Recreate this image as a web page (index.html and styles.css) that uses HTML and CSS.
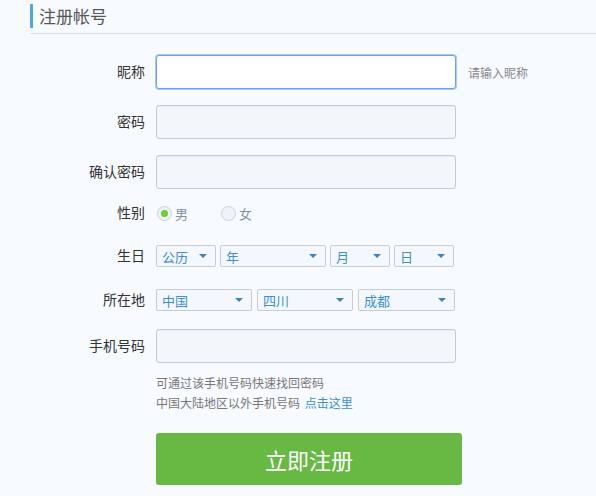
FILE: index.html
```html
<!DOCTYPE html>
<html lang="zh-CN">
<head>
<meta charset="utf-8">
<title>注册帐号</title>
<link rel="stylesheet" href="styles.css">
</head>
<body>
<div class="header"><h1 class="title">注册帐号</h1></div>
<form class="form">
  <div class="row row-input">
    <label class="label">昵称</label>
    <div class="input input-focus"></div>
    <span class="hint">请输入昵称</span>
  </div>
  <div class="row row-input">
    <label class="label">密码</label>
    <div class="input"></div>
  </div>
  <div class="row row-input">
    <label class="label">确认密码</label>
    <div class="input"></div>
  </div>
  <div class="row row-gender">
    <label class="label">性别</label>
    <div class="radios">
      <span class="radio checked"></span><span class="radio-text">男</span>
      <span class="radio second"></span><span class="radio-text">女</span>
    </div>
  </div>
  <div class="row row-birth">
    <label class="label">生日</label>
    <div class="selects gap4">
      <div class="select w60"><span>公历</span><i class="arrow"></i></div>
      <div class="select w106"><span>年</span><i class="arrow"></i></div>
      <div class="select w60"><span>月</span><i class="arrow"></i></div>
      <div class="select w60"><span>日</span><i class="arrow"></i></div>
    </div>
  </div>
  <div class="row row-loc">
    <label class="label">所在地</label>
    <div class="selects gap5">
      <div class="select w96"><span>中国</span><i class="arrow"></i></div>
      <div class="select w96"><span>四川</span><i class="arrow"></i></div>
      <div class="select w97"><span>成都</span><i class="arrow"></i></div>
    </div>
  </div>
  <div class="row row-input row-last">
    <label class="label">手机号码</label>
    <div class="input"></div>
  </div>
  <div class="help">
    <p>可通过该手机号码快速找回密码</p>
    <p>中国大陆地区以外手机号码 <a class="link" href="#">点击这里</a></p>
  </div>
  <div class="submit-wrap">
    <button type="button" class="submit">立即注册</button>
  </div>
</form>
</body>
</html>
```
FILE: styles.css
```css
* { box-sizing: border-box; }
html, body {
  margin: 0;
  padding: 0;
  background: #f7fbff;
  font-family: "Noto Sans CJK SC", "Microsoft YaHei", sans-serif;
}
.header {
  margin-left: 30px;
  padding-top: 4px;
  padding-bottom: 5px;
  border-bottom: 1px solid #dcdfe3;
}
.title {
  margin: 0;
  height: 24px;
  line-height: 24px;
  border-left: 3px solid #4fa8e0;
  padding-left: 6px;
  font-size: 17px;
  font-weight: normal;
  color: #555;
}
.form {
  margin-top: 21px;
}
.row {
  display: flex;
  align-items: center;
}
.label {
  width: 145px;
  margin-right: 11px;
  text-align: right;
  font-size: 14px;
  line-height: 1;
  padding-bottom: 2px;
  color: #333;
  flex: none;
}
.row-input { height: 34px; margin-bottom: 16px; }
.row-last { margin-bottom: 0; }
.row-gender { height: 16px; margin-bottom: 24px; }
.row-birth { height: 22px; margin-bottom: 22px; }
.row-loc { height: 22px; margin-bottom: 18px; }

.input {
  width: 300px;
  height: 34px;
  border: 1px solid #c2ccd6;
  border-radius: 3px;
  background: #f3f7fb;
  box-shadow: inset 0 1px 1px rgba(0,0,0,0.05);
}
.input-focus {
  background: #fff;
  border: 1px solid #6c9fee;
  box-shadow: 0 0 0 1px #a9c9f6;
}
.hint {
  margin-left: 12px;
  font-size: 12px;
  color: #888;
}
.radios {
  display: flex;
  align-items: center;
}
.radio {
  width: 15px;
  height: 15px;
  border-radius: 50%;
  border: 1px solid #c8d2dc;
  background: #eef3f7;
  margin-left: 1px;
  position: relative;
  flex: none;
}
.radio.checked::after {
  content: "";
  position: absolute;
  left: 3px;
  top: 3px;
  width: 7px;
  height: 7px;
  border-radius: 50%;
  background: #6bd12a;
}
.radio.second { margin-left: 33px; }
.radio-text {
  margin-left: 3px;
  font-size: 13px;
  color: #7f91a5;
}
.selects { display: flex; }
.gap4 { gap: 4px; }
.gap5 { gap: 5px; }
.select {
  height: 22px;
  border: 1px solid #c3cdd7;
  border-radius: 2px;
  background: #f4f8fc;
  display: flex;
  align-items: center;
  justify-content: space-between;
  padding: 0 8px 0 5px;
  font-size: 13px;
  color: #3a8fd6;
}
.w60 { width: 60px; }
.w106 { width: 106px; }
.w96 { width: 96px; }
.w97 { width: 97px; }
.arrow {
  width: 0;
  height: 0;
  border-left: 4px solid transparent;
  border-right: 4px solid transparent;
  border-top: 4px solid #3a82c0;
}
.help {
  margin-left: 156px;
  margin-top: 10px;
  font-size: 12px;
  color: #777;
  line-height: 20px;
}
.help p { margin: 0; }
.link { color: #3a8fd6; text-decoration: none; margin-left: 2px; }
.submit-wrap {
  margin-left: 156px;
  margin-top: 20px;
}
.submit {
  width: 306px;
  height: 52px;
  border: none;
  border-radius: 3px;
  background: #68b944;
  color: #fff;
  font-family: inherit;
  font-size: 22px;
  padding: 0;
  cursor: pointer;
}
```
